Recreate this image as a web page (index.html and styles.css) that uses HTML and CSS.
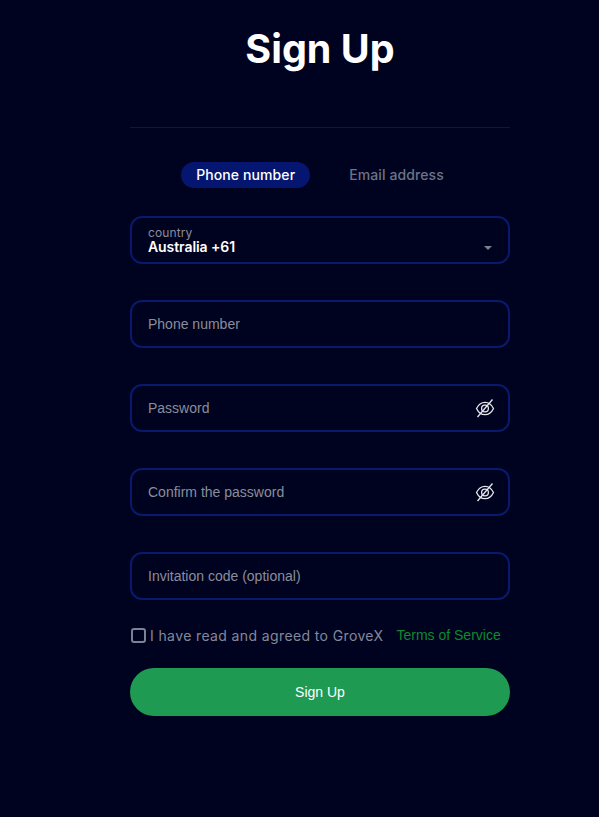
FILE: index.html
```html
<!DOCTYPE html>
<html>
	<head>
		<meta charset="UTF-8">
		<title>Sign Up</title>
		<link rel="stylesheet" href="styles.css">
	</head>
	<body>
		<div class="page">
			<h1 class="title">Sign Up</h1>
			<div class="line"></div>
			<div class="tabs">
				<span class="tab tab-on">Phone number</span>
				<span class="tab">Email address</span>
			</div>
			<div class="field field-select">
				<div class="select-text">
					<span class="select-label">country</span>
					<span class="select-value">Australia +61</span>
				</div>
				<span class="arrow"></span>
			</div>
			<div class="field">
				<span class="hint">Phone number</span>
			</div>
			<div class="field">
				<span class="hint">Password</span>
				<svg class="eye" viewBox="0 0 20 20" width="20" height="20">
					<path d="M1.500 10.500C3.500 6.300 6.800 4.300 10 4.300s6.500 2 8.500 6.200c-2 4.200-5.300 6.200-8.500 6.200s-6.500-2-8.500-6.200z"/>
					<circle cx="10" cy="10.500" r="3.400"/>
					<path d="M17.500 1.500L2.500 19"/>
				</svg>
			</div>
			<div class="field">
				<span class="hint">Confirm the password</span>
				<svg class="eye" viewBox="0 0 20 20" width="20" height="20">
					<path d="M1.500 10.500C3.500 6.300 6.800 4.300 10 4.300s6.500 2 8.500 6.200c-2 4.200-5.300 6.200-8.500 6.200s-6.500-2-8.500-6.200z"/>
					<circle cx="10" cy="10.500" r="3.400"/>
					<path d="M17.500 1.500L2.500 19"/>
				</svg>
			</div>
			<div class="field">
				<span class="hint">Invitation code (optional)</span>
			</div>
			<div class="agree">
				<span class="check"></span>
				<span class="agree-text">I have read and agreed to GroveX</span>
				<span class="terms">Terms of Service</span>
			</div>
			<div class="btn">Sign Up</div>
		</div>
	</body>
</html>
```

FILE: styles.css
```css
*{
	box-sizing: border-box;
	margin: 0;
	padding: 0;
}
html,body{
	height: 100%;
}
body{
	background: #00031f;
	font-family: "Inter", "Liberation Sans", sans-serif;
	overflow: hidden;
}
.page{
	width: 380px;
	margin-left: 130px;
}
.title{
	height: 127px;
	padding-top: 21px;
	font-size: 39.5px;
	line-height: 56px;
	font-weight: 700;
	color: #fff;
	text-align: center;
}
.line{
	height: 1px;
	background: #0b1550;
}
.tabs{
	display: flex;
	justify-content: center;
	gap: 9px;
	margin-top: 34px;
	margin-bottom: 28px;
}
.tab{
	height: 26px;
	line-height: 26px;
	padding: 0 15px;
	border-radius: 13px;
	font-size: 14px;
	font-weight: 500;
	letter-spacing: 0.1px;
	color: #6b7488;
}
.tab-on{
	margin-right: 15px;
	background: #041670;
	color: #fff;
}
.field{
	display: flex;
	align-items: center;
	justify-content: space-between;
	height: 48px;
	margin-bottom: 36px;
	padding: 0 13px 0 16px;
	border: 2px solid #071a6e;
	border-radius: 12px;
	background: #00031f;
}
.hint{
	font-family: "Liberation Sans", sans-serif;
	font-size: 14px;
	color: #8a8d9c;
}
.select-text{
	display: flex;
	flex-direction: column;
}
.select-label{
	font-size: 12px;
	line-height: 13px;
	letter-spacing: 0.1px;
	color: #8a8d9c;
}
.select-value{
	font-size: 14px;
	line-height: 15px;
	font-weight: 600;
	letter-spacing: -0.08px;
	color: #fff;
}
.arrow{
	width: 0;
	height: 0;
	margin: 16px 3px 0 0;
	border-left: 4px solid transparent;
	border-right: 4px solid transparent;
	border-top: 4px solid #7d8090;
}
.eye{
	fill: none;
	stroke: #e6e6ea;
	stroke-width: 1.300;
}
.agree{
	display: flex;
	align-items: center;
	height: 32px;
	margin-top: -17px;
	margin-bottom: 17px;
}
.check{
	width: 15px;
	height: 15px;
	margin: 0 4px 0 1px;
	border: 2px solid #7c8296;
	border-radius: 3px;
}
.agree-text{
	font-size: 14px;
	letter-spacing: 0.38px;
	color: #85889a;
	white-space: nowrap;
}
.terms{
	margin-left: 13px;
	font-family: "Liberation Sans", sans-serif;
	font-size: 14px;
	color: #0c8a2e;
	white-space: nowrap;
}
.btn{
	height: 48px;
	line-height: 48px;
	border-radius: 24px;
	background: #1f9a52;
	font-family: "Liberation Sans", sans-serif;
	font-size: 14px;
	color: #fff;
	text-align: center;
}
```
